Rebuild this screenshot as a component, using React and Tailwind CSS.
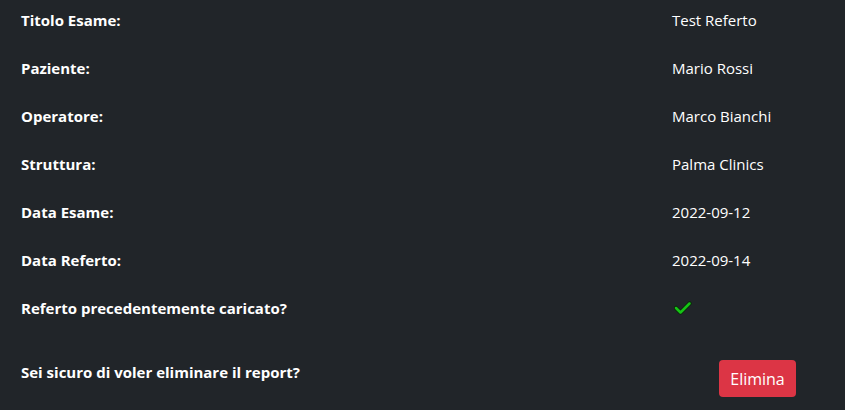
const rows = [
  ['Titolo Esame:', 'Test Referto'],
  ['Paziente:', 'Mario Rossi'],
  ['Operatore:', 'Marco Bianchi'],
  ['Struttura:', 'Palma Clinics'],
  ['Data Esame:', '2022-09-12'],
  ['Data Referto:', '2022-09-14'],
];

function Check() {
  return (
    <svg width="18" height="14" viewBox="0 0 18 14">
      <polyline points="2,7 6.5,11.5 15.5,2.5" fill="none" stroke="#0b2a0b" strokeWidth="4.5" strokeLinecap="round" strokeLinejoin="round" />
      <polyline points="2,7 6.5,11.5 15.5,2.5" fill="none" stroke="#16c316" strokeWidth="2.5" strokeLinecap="round" strokeLinejoin="round" />
    </svg>
  );
}

export default function App() {
  return (
    <div
      className="w-[845px] h-[410px] bg-[#212529] text-white overflow-hidden pt-[8px] pl-[21px]"
      style={{ fontFamily: '"Open Sans", "Noto Sans", sans-serif' }}
    >
      <div className="flex flex-col gap-6 text-[15px] leading-6">
        {rows.map(([label, value]) => (
          <div key={label} className="flex">
            <div className="w-[651px] font-bold">{label}</div>
            <div>{value}</div>
          </div>
        ))}
        <div className="flex">
          <div className="w-[651px] font-bold">Referto precedentemente caricato?</div>
          <div className="flex items-center pl-[2px]">
            <Check />
          </div>
        </div>
        <div className="flex mt-[14px]">
          <div className="w-[698px] pt-[2px] font-bold">Sei sicuro di voler eliminare il report?</div>
          <button className="mt-[2px] h-[37px] w-[77px] rounded bg-[#dc3545] text-white text-base">
            Elimina
          </button>
        </div>
      </div>
    </div>
  );
}
